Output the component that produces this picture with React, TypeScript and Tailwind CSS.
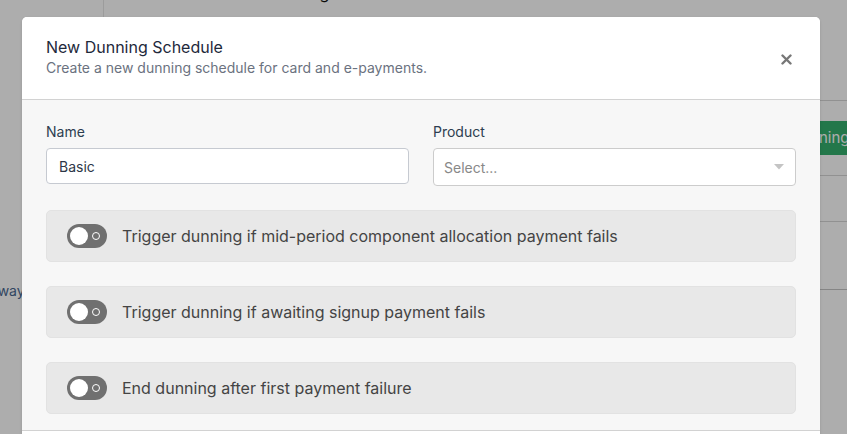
import React, { useState } from 'react';

const font = { fontFamily: 'Inter, "Noto Sans", sans-serif' };

function Toggle({ on, onClick }: { on: boolean; onClick: () => void }) {
  return (
    <button
      onClick={onClick}
      className={`relative flex h-6 w-10 flex-shrink-0 items-center rounded-full ${on ? 'bg-[#2f9e5f]' : 'bg-[#707070]'}`}
    >
      <span
        className={`absolute top-[3px] h-[18px] w-[18px] rounded-full bg-white ${on ? 'left-[19px]' : 'left-[3px]'}`}
      />
      {!on && <span className="absolute left-[25px] top-[8px] h-2 w-2 rounded-full border-[1.5px] border-white" />}
    </button>
  );
}

function OptionRow({ label }: { label: string }) {
  const [on, setOn] = useState(false);
  return (
    <div className="flex h-[52px] items-center gap-[15px] rounded-[5px] border border-[#e2e2e2] bg-[#e8e8e8] pl-5">
      <Toggle on={on} onClick={() => setOn(!on)} />
      <span className="text-[16px] text-[#444]">{label}</span>
    </div>
  );
}

export default function App() {
  const [name, setName] = useState('Basic');

  return (
    <div className="relative h-[434px] w-[847px] overflow-hidden bg-white" style={font}>
      {/* Page behind the modal */}
      <div className="flex h-full">
        <div className="flex w-[104px] flex-shrink-0 flex-col border-r border-[#e6e6e6]">
          <div className="-ml-[33px] mt-[280px] whitespace-nowrap text-[14px] text-[#4a6890]">Gateway</div>
        </div>
        <div className="flex flex-1 flex-col">
          <div className="-mt-[17px] pl-[180px] text-[16px] leading-5 text-[#111]">Billing</div>
          <div className="flex flex-1 justify-end">
            <div className="mt-[78px] flex w-[27px] flex-col">
              <div className="h-[20px] border-b border-[#d6d6d6]" />
              <div className="h-[20px]" />
              <div className="flex h-[34px] items-center overflow-hidden whitespace-nowrap bg-[#34b06e] text-[15px] text-white">
                <span className="-ml-[1px]">ning</span>
              </div>
              <div className="h-[21px] border-b border-[#d6d6d6]" />
              <div className="h-[46px] border-b border-[#d6d6d6]" />
              <div className="h-[68px] border-b border-[#c4c4c4]" />
            </div>
          </div>
        </div>
      </div>

      {/* Overlay */}
      <div className="absolute inset-0 bg-black/[0.32]" />

      {/* Modal */}
      <div className="absolute left-[22px] top-[17px] w-[798px] overflow-hidden rounded-t-[5px] bg-[#f7f7f7] shadow-sm">
        <div className="flex items-center justify-between border-b border-[#d2d2d2] bg-white pb-[21px] pl-6 pr-7 pt-5">
          <div>
            <h2 className="text-[16px] leading-5 text-[#1e293b]">New Dunning Schedule</h2>
            <p className="mt-[1px] text-[14px] leading-5 text-[#6b7280]">
              Create a new dunning schedule for card and e-payments.
            </p>
          </div>
          <button className="mt-[3px] text-[#777]">
            <svg width="11" height="11" viewBox="0 0 11 11" fill="none">
              <path d="M1.5 1.5l8 8M9.5 1.5l-8 8" stroke="currentColor" strokeWidth="2.4" strokeLinecap="round" />
            </svg>
          </button>
        </div>

        <div className="flex flex-col gap-6 border-b border-[#d2d2d2] px-6 pb-4 pt-[22px]">
          <div className="grid grid-cols-2 gap-6">
            <div>
              <label className="mb-[6px] block text-[14px] leading-5 text-[#2d3e50]">Name</label>
              <input
                value={name}
                onChange={(e) => setName(e.target.value)}
                className="h-9 w-full rounded-[4px] border border-[#c6cad1] bg-white px-3 text-[14px] text-[#2d3748] outline-none"
              />
            </div>
            <div>
              <label className="mb-[6px] block text-[14px] leading-5 text-[#2d3e50]">Product</label>
              <div className="flex h-[38px] items-center justify-between rounded-[4px] border border-[#cccccc] bg-white pl-[10px] pr-[11px]">
                <span className="text-[14px] text-[#888]">Select...</span>
                <svg width="10" height="6" viewBox="0 0 10 6">
                  <path d="M0 0h10L5 5.5z" fill="#c4c4c4" />
                </svg>
              </div>
            </div>
          </div>

          <OptionRow label="Trigger dunning if mid-period component allocation payment fails" />
          <OptionRow label="Trigger dunning if awaiting signup payment fails" />
          <OptionRow label="End dunning after first payment failure" />
        </div>
        <div className="h-10 bg-white" />
      </div>
    </div>
  );
}
